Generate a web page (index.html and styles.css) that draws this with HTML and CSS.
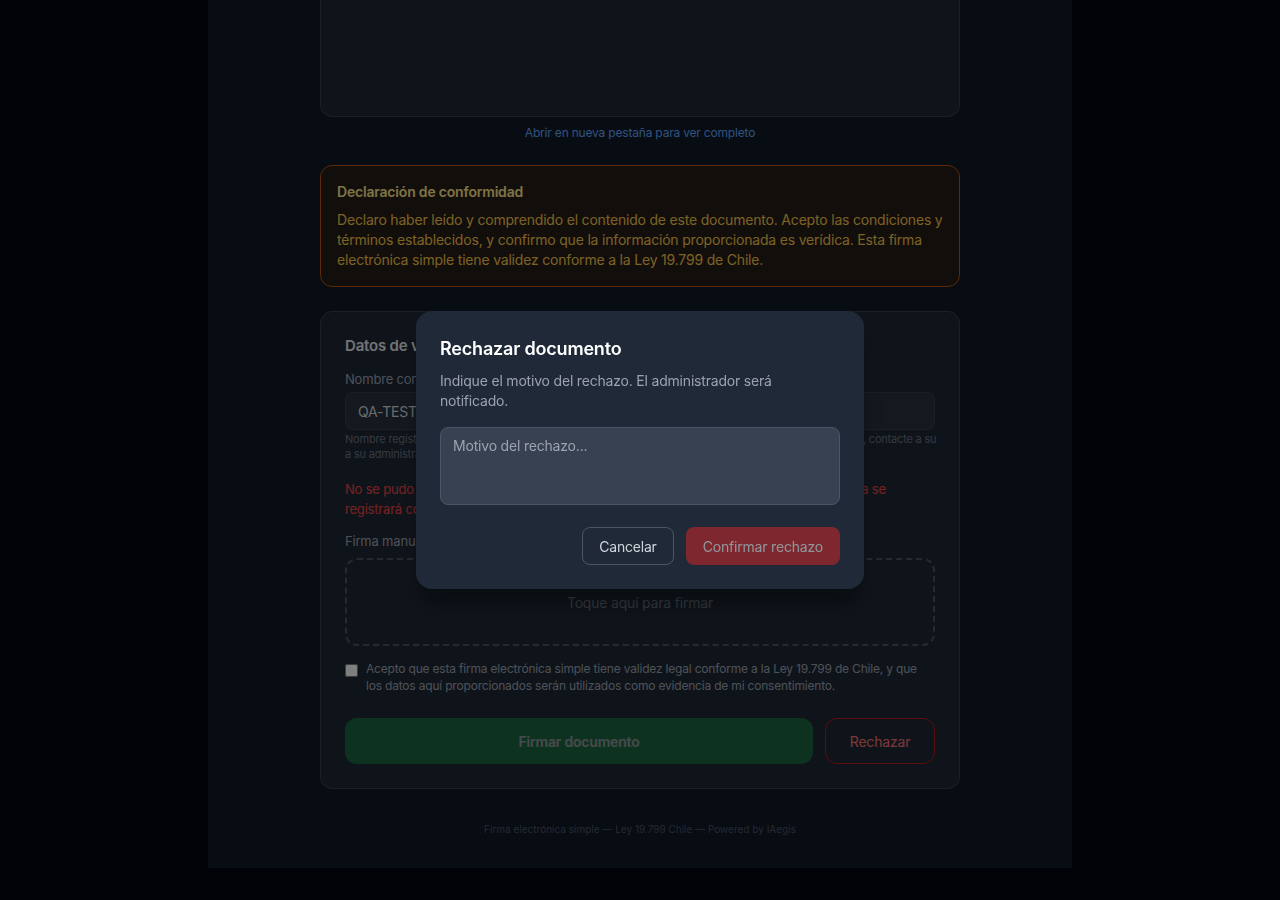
FILE: index.html
```html
<!DOCTYPE html>
<html lang="es">
<head>
<meta charset="utf-8">
<title>Firma de documento</title>
<link rel="stylesheet" href="styles.css">
</head>
<body>
<div class="shell">
  <main class="content">
    <section class="viewer">
      <div class="doc-frame"></div>
      <a class="open-link" href="#">Abrir en nueva pestaña para ver completo</a>
    </section>

    <section class="declaration">
      <h3 class="decl-title">Declaración de conformidad</h3>
      <p class="decl-text">Declaro haber leído y comprendido el contenido de este documento. Acepto las condiciones y términos establecidos, y confirmo que la información proporcionada es verídica. Esta firma electrónica simple tiene validez conforme a la Ley 19.799 de Chile.</p>
    </section>

    <section class="form-card">
      <h2 class="form-title">Datos de verificación</h2>
      <label class="field-label" for="nombre">Nombre completo</label>
      <input id="nombre" class="text-input" value="QA-TEST Usuario de Prueba" readonly>
      <p class="hint"><span class="line">Nombre registrado por la organización que envió el documento. Si este dato es incorrecto o incompleto, contacte a su</span><span class="line">a su administrador.</span></p>
      <p class="error"><span class="line">No se pudo obtener su ubicación. Puede continuar con la firma de todos modos, la hora se</span><span class="line">registrará como evidencia.</span></p>
      <span class="field-label sig-label">Firma manuscrita</span>
      <div class="sig-pad">Toque aquí para firmar</div>
      <label class="consent">
        <input type="checkbox" class="check">
        <span>Acepto que esta firma electrónica simple tiene validez legal conforme a la Ley 19.799 de Chile, y que los datos aquí proporcionados serán utilizados como evidencia de mi consentimiento.</span>
      </label>
      <div class="actions">
        <button class="btn-sign" disabled>Firmar documento</button>
        <button class="btn-reject">Rechazar</button>
      </div>
    </section>
  </main>
  <footer class="footer">Firma electrónica simple — Ley 19.799 Chile — Powered by IAegis</footer>
</div>

<div class="overlay">
  <div class="modal" role="dialog" aria-labelledby="modal-title">
    <h2 id="modal-title" class="modal-title">Rechazar documento</h2>
    <p class="modal-text">Indique el motivo del rechazo. El administrador será notificado.</p>
    <textarea class="modal-textarea" rows="3" placeholder="Motivo del rechazo..."></textarea>
    <div class="modal-actions">
      <button class="btn-cancel">Cancelar</button>
      <button class="btn-confirm" disabled>Confirmar rechazo</button>
    </div>
  </div>
</div>
</body>
</html>
```

FILE: styles.css
```css
* { box-sizing: border-box; }

html, body {
  margin: 0;
  padding: 0;
  background: #030712;
  font-family: Inter, "Noto Sans", "Liberation Sans", sans-serif;
  letter-spacing: -0.012em;
  color: #e5e7eb;
}

button, input, textarea {
  letter-spacing: inherit;
}

.shell {
  width: 864px;
  margin: -483px auto 0;
  background: #111827;
  padding-bottom: 31px;
}

.content {
  width: 640px;
  margin: 0 auto;
  display: flex;
  flex-direction: column;
  gap: 24px;
}

.viewer {
  display: flex;
  flex-direction: column;
  align-items: center;
}

.doc-frame {
  width: 100%;
  height: 600px;
  background: #1f2937;
  border: 1px solid #374151;
  border-radius: 12px;
}

.open-link {
  margin-top: 8px;
  font-size: 12px;
  line-height: 16px;
  color: #60a5fa;
  text-decoration: none;
}

.declaration {
  background: #241c19;
  border: 1px solid #b8530e;
  border-radius: 12px;
  padding: 16px;
}

.decl-title {
  margin: 0;
  font-size: 14px;
  line-height: 20px;
  font-weight: 600;
  color: #fde68a;
}

.decl-text {
  margin: 8px 0 0;
  font-size: 14px;
  line-height: 20px;
  color: #f6c54a;
}

.form-card {
  background: #1f2937;
  border: 1px solid #374151;
  border-radius: 12px;
  padding: 24px;
  display: flex;
  flex-direction: column;
}

.form-title {
  margin: 0 0 14px;
  font-size: 15px;
  line-height: 20px;
  font-weight: 600;
  color: #e5e7eb;
}

.field-label {
  display: block;
  font-size: 13px;
  line-height: 18px;
  color: #9ca3af;
  margin-bottom: 4px;
}

.text-input {
  width: 100%;
  height: 38px;
  padding: 0 12px;
  background: #283241;
  border: 1px solid #374151;
  border-radius: 8px;
  font-family: inherit;
  font-size: 14px;
  color: #d1d5db;
  outline: none;
}

.line {
  display: block;
}

.hint .line:first-child,
.error .line:first-child {
  white-space: nowrap;
}

.hint {
  margin: 2px 0 0;
  font-size: 11px;
  line-height: 15px;
  color: #6b7280;
}

.error {
  margin: 17px 0 0;
  font-size: 13px;
  line-height: 20px;
  color: #ef4444;
}

.sig-label {
  margin-top: 13px;
  margin-bottom: 8px;
}

.sig-pad {
  height: 88px;
  border: 2px dashed #4b5563;
  border-radius: 12px;
  display: flex;
  align-items: center;
  justify-content: center;
  font-size: 14px;
  color: #6b7280;
}

.consent {
  margin-top: 14px;
  display: flex;
  align-items: flex-start;
  gap: 8px;
  font-size: 12px;
  line-height: 17px;
  color: #9ca3af;
}

.check {
  margin: 4px 0 0;
  width: 13px;
  height: 13px;
  flex: none;
}

.actions {
  margin-top: 24px;
  display: flex;
  gap: 12px;
}

.btn-sign {
  flex: 1;
  height: 46px;
  border: none;
  border-radius: 12px;
  background: #16a34a;
  color: #ffffff;
  font-family: inherit;
  font-size: 14px;
  font-weight: 600;
  opacity: 0.5;
}

.btn-reject {
  width: 110px;
  height: 46px;
  background: transparent;
  border: 1px solid #b91c1c;
  border-radius: 12px;
  color: #f87171;
  font-family: inherit;
  font-size: 14px;
}

.footer {
  margin-top: 32px;
  text-align: center;
  font-size: 10px;
  line-height: 16px;
  letter-spacing: 0;
  color: #4b5563;
}

.overlay {
  position: fixed;
  inset: 0;
  background: rgba(0, 0, 0, 0.5);
  display: flex;
  align-items: center;
  justify-content: center;
}

.modal {
  width: 448px;
  background: #1f2937;
  border-radius: 16px;
  padding: 24px;
  box-shadow: 0 20px 25px -5px rgba(0, 0, 0, 0.4);
}

.modal-title {
  margin: 0;
  font-size: 18px;
  line-height: 28px;
  font-weight: 600;
  color: #ffffff;
}

.modal-text {
  margin: 8px 0 0;
  font-size: 14px;
  line-height: 20px;
  color: #9ca3af;
}

.modal-textarea {
  display: block;
  width: 100%;
  height: 78px;
  margin-top: 16px;
  padding: 8px 12px;
  background: #374151;
  border: 1px solid #4b5563;
  border-radius: 8px;
  font-family: inherit;
  font-size: 14px;
  line-height: 20px;
  color: #e5e7eb;
  resize: none;
  outline: none;
}

.modal-textarea::placeholder { color: #9ca3af; }

.modal-actions {
  margin-top: 22px;
  display: flex;
  justify-content: flex-end;
  gap: 12px;
}

.btn-cancel,
.btn-confirm {
  height: 38px;
  padding: 0 16px;
  border-radius: 8px;
  font-family: inherit;
  font-size: 14px;
}

.btn-cancel {
  background: transparent;
  border: 1px solid #4b5563;
  color: #d1d5db;
}

.btn-confirm {
  background: #dc2626;
  border: 1px solid transparent;
  color: #ffffff;
  opacity: 0.5;
}
```
